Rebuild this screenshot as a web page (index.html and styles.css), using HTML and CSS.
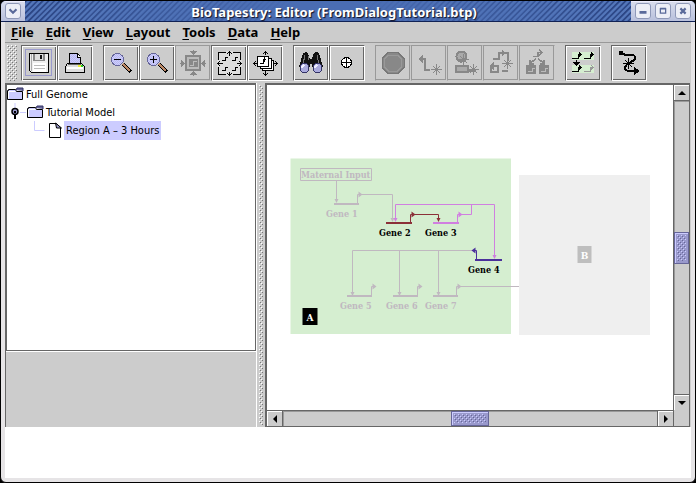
FILE: index.html
```html
<!DOCTYPE html>
<html lang="en">
<head>
<meta charset="utf-8">
<title>BioTapestry: Editor (FromDialogTutorial.btp)</title>
<link rel="stylesheet" href="styles.css">
</head>
<body>
<svg class="defs" aria-hidden="true">
  <defs>
    <pattern id="bumps" width="4" height="4" patternUnits="userSpaceOnUse">
      <path d="M0 0h1v1h-1zM2 2h1v1h-1z" fill="#fff"/><path d="M1 1h1v1h-1zM3 3h1v1h-1z" fill="#777"/>
    </pattern>
    <pattern id="thumb-bumps" width="4" height="4" patternUnits="userSpaceOnUse">
      <path d="M0 0h1v1h-1zM2 2h1v1h-1z" fill="#ccf"/><path d="M1 1h1v1h-1zM3 3h1v1h-1z" fill="#669"/>
    </pattern>
    <pattern id="lens" width="2" height="2" patternUnits="userSpaceOnUse">
      <path d="M0 0h2v2h-2z" fill="#ccf"/><path d="M0 0h1v1h-1zM1 1h1v1h-1z" fill="#bbe"/>
    </pattern>
    <g id="spark"><path d="M.5-5V6M-5 .5H6M-3-3L4 4M4-3L-3 4" fill="none" stroke="currentColor"/></g>
    <g id="folder">
      <path d="M9 3l1-2h6v3" fill="#669" stroke="#336"/>
      <path d="M.5 12.500v-9h1v-1h7l1 2h6v8z" fill="#ccf" stroke="#000"/>
      <path d="M1.500 11.500v-7h7" fill="none" stroke="#fff"/>
    </g>
  </defs>
</svg>
<div class="window">
  <header class="titlebar">
    <div class="corner-box"><button class="win-btn" aria-label="Window menu"><svg viewBox="0 0 16 16"><path d="M4 6l4 4 4-4" fill="none" stroke="#5a6a9a" stroke-width="2.500"/></svg></button></div>
    <h1 class="title">BioTapestry: Editor (FromDialogTutorial.btp)</h1>
    <div class="corner-box">
      <button class="win-btn" aria-label="Minimize"><svg viewBox="0 0 16 16"><path d="M4 8h8v3H4z" fill="#5a6a9a"/></svg></button>
      <button class="win-btn" aria-label="Maximize"><svg viewBox="0 0 16 16"><path d="M5 5.500h6v5H5zM4.500 5h7" fill="none" stroke="#5a6a9a" stroke-width="1.500"/></svg></button>
      <button class="win-btn" aria-label="Close"><svg viewBox="0 0 16 16"><path d="M5 5l6 6M11 5l-6 6" stroke="#5a6a9a" stroke-width="2.500"/></svg></button>
    </div>
  </header>
  <nav class="menubar" aria-label="Main">
    <button><u>F</u>ile</button><button><u>E</u>dit</button><button><u>V</u>iew</button><button><u>L</u>ayout</button><button><u>T</u>ools</button><button><u>D</u>ata</button><button><u>H</u>elp</button>
  </nav>
  <div class="toolbar" role="toolbar" aria-label="Tools">
    <svg class="grip"><rect width="100%" height="100%" fill="url(#bumps)"/></svg>
    <div class="group">
      <button class="tool" aria-label="Save"><svg viewBox="0 0 32 32">
        <path d="M2.500 2.500h26v26h-26z" fill="none" stroke="#99c"/>
        <path d="M6.500 6.500h19v19h-17l-2-2z" fill="#eee" stroke="#000"/><path d="M8.500 7v17" stroke="#aaa"/><path d="M10 7h12v7H10z" fill="#888"/><path d="M12 7h8v6h-8z" fill="#ddd"/><path d="M17 8h2v4h-2z" fill="#111"/><path d="M10 16h13v9H10z" fill="#fff"/><path d="M11 18.500h11M11 21.500h11" stroke="#bbb"/></svg></button>
      <button class="tool" aria-label="Print"><svg viewBox="0 0 32 32">
        <path d="M10.500 17.500v-11h8l3 4v7z" fill="url(#lens)" stroke="#000"/><path d="M18.500 7v3.500h3" fill="#fff" stroke="#000"/>
        <path d="M8.500 16.500h14l3 3v6h-19v-6z" fill="#ddd" stroke="#000"/><path d="M8 20h16v2H8z" fill="#fff"/><path d="M9 17.500h13" stroke="#666"/><path d="M19 18h3v2h-3z" fill="#ee3"/><path d="M22 18h2v2h-2z" fill="#2c2"/></svg></button>
    </div>
    <div class="group">
      <button class="tool" aria-label="Zoom out"><svg viewBox="0 0 32 32"><path d="M18 17l8 8" stroke="#000" stroke-width="4"/><path d="M18 17l7 7" stroke="#b86" stroke-width="2"/><circle cx="12.500" cy="12.500" r="6" fill="url(#lens)" stroke="#669" stroke-width="1"/><path d="M9 12.500h7" stroke="#000"/></svg></button>
      <button class="tool" aria-label="Zoom in"><svg viewBox="0 0 32 32"><path d="M18 17l8 8" stroke="#000" stroke-width="4"/><path d="M18 17l7 7" stroke="#b86" stroke-width="2"/><circle cx="12.500" cy="12.500" r="6" fill="url(#lens)" stroke="#669" stroke-width="1"/><path d="M9 12.500h7M12.500 9v7" stroke="#000"/></svg></button>
      <button class="tool" aria-label="Zoom to selection" disabled><svg viewBox="0 0 32 32"><path d="M9 9h14v14H9z" fill="#bbb" stroke="#888" stroke-width="2"/><path d="M12 12h9v8h-9z" fill="#888"/><path d="M13 18.500h3v-4h4" fill="none" stroke="#bbb"/><path d="M16.500 3v4M16.500 29v-4M3 16.500h4M29 16.500h-4" stroke="#888"/><path d="M13 4h7l-3.500 4zM13 28h7l-3.500-4zM4 13v7l4-3.500zM28 13v7l-4-3.500z" fill="#888"/></svg></button>
      <button class="tool" aria-label="Zoom to model"><svg viewBox="0 0 32 32"><path d="M5.500 5.500h22v22h-22z" fill="#ddd" stroke="#000"/><path d="M4 13h3v7H4zM26 13h3v7h-3zM13 4h7v3h-7zM13 26h7v3h-7z" fill="#ddd"/><path d="M4.500 16.500h5M7 14l-2.500 2.500L7 19M28.500 16.500h-5M26 14l2.500 2.500L26 19M16.500 4.500v4M14 7l2.500-2.500L19 7M16.500 28.500v-4M14 26l2.500 2.500L19 26" fill="none" stroke="#000"/><path d="M9 13.500h3v-3h3M19 13.500h3v-3h3M9 23.500h3v-3h3M19 23.500h3v-3h3" fill="none" stroke="#000"/></svg></button>
      <button class="tool" aria-label="Zoom to all models"><svg viewBox="0 0 32 32"><path d="M13.500 13.500h11v10h-11z" fill="#fff" stroke="#000"/><path d="M11.500 11.500h11v10h-11z" fill="#fff" stroke="#000"/><path d="M8.500 9.500h11v10h-11z" fill="#fff" stroke="#000"/><path d="M11 16.500h3v-4h3M15.500 10v5" fill="none" stroke="#000"/><path d="M16.500 4v4M14 7l2.500-2.500L19 7M16.500 28v-4M14 26l2.500 2.500L19 26M4 16.500h4M7 14l-2.500 2.500L7 19M29 16.500h-4M26 14l2.500 2.500L26 19" fill="none" stroke="#000"/></svg></button>
    </div>
    <div class="group">
      <button class="tool" aria-label="Search"><svg viewBox="0 0 32 32"><path d="M8 6l3-1 2 1 2 6h2l2-6 2-1 3 1 4 14-4 3-6-2-2-5-2 5-6 2-4-3z" fill="#111"/><path d="M10 8l-2 9M22 8l2 9M13 9v4" stroke="#777"/><circle cx="9.500" cy="21" r="4.500" fill="#aad" stroke="#336"/><circle cx="22.500" cy="21" r="4.500" fill="#aad" stroke="#336"/><path d="M6 21l3-3M19 21l3-3" stroke="#eef" stroke-width="2"/></svg></button>
      <button class="tool" aria-label="Center"><svg viewBox="0 0 32 32"><circle cx="15.500" cy="15.500" r="5" fill="#fff" stroke="#000"/><path d="M10 15.500h11M15.500 10v11" stroke="#000"/></svg></button>
    </div>
    <div class="group">
      <button class="tool" aria-label="Stop" disabled><svg viewBox="0 0 32 32"><path d="M11 5.500h10l6 6v9l-6 6H11l-6-6v-9z" fill="#888" stroke="#777"/><path d="M11.500 8h9l4 4v8l-4 4h-9l-4-4v-8z" fill="none" stroke="#999"/></svg></button>
      <button class="tool" aria-label="Add gene link" disabled><svg viewBox="0 0 32 32"><path d="M7 12h5v11h5" fill="none" stroke="#888" stroke-width="2"/><path d="M5 12l5-4v8z" fill="#888"/><use href="#spark" x="23" y="22"/></svg></button>
      <button class="tool" aria-label="Add node" disabled><svg viewBox="0 0 32 32"><path d="M7 19h12v6H7z" fill="#aaa" stroke="#888" stroke-width="2"/><circle cx="12.500" cy="9.500" r="5" fill="#aaa" stroke="#888" stroke-width="2"/><path d="M19 23h8" stroke="#888" stroke-width="3"/><use href="#spark" x="14" y="12"/><use href="#spark" x="24" y="22"/></svg></button>
      <button class="tool" aria-label="Add link" disabled><svg viewBox="0 0 32 32"><path d="M8 12h6V6h9v8M13 26v-7H6M13 25H6v-5M23 24h-6" fill="none" stroke="#888" stroke-width="2"/><path d="M17 3l4 3-4 3zM9 15v8l-5-4z" fill="#888"/><use href="#spark" x="22" y="16"/></svg></button>
      <button class="tool" aria-label="Add submodel" disabled><svg viewBox="0 0 32 32"><path d="M5 18h10v9H5zM18 18h10v9H18z" fill="#888"/><path d="M7 24.500h4v-3h3M20 24.500h4v-3h3" fill="none" stroke="#bbb"/><path d="M12 9.500h5v-4h4M18 3l3 2.500-3 2.500M15 12l-6 4M17 12l6 4M9 13v4h4M23 13v4h-4" fill="none" stroke="#888" stroke-width="1.500"/></svg></button>
    </div>
    <div class="group">
      <button class="tool" aria-label="Pull down"><svg viewBox="0 0 32 32"><path d="M5 5h22v8H5zM5 18h22v8H5z" fill="#d5eed0"/><path d="M5 11.500h6v-4h3M17 11.500h6v-4h3M5 24.500h6v-4h3M9.500 13v4" fill="none" stroke="#000"/><path d="M12 5l3 2.500-3 2.500zM24 5l3 2.500-3 2.500zM12 18l3 2.500-3 2.500zM6 15h7l-3.500 4z"/><path d="M17 24.500h6v-4h3M24 18l2 2.500-2 2" fill="none" stroke="#999"/></svg></button>
    </div>
    <div class="group">
      <button class="tool" aria-label="Relayout link"><svg viewBox="0 0 32 32"><path d="M7 6l6 2h6q3 0 3 3 0 2-4 4-6 3-6 6 0 3 5 3h7" fill="none" stroke="#000" stroke-width="2"/><path d="M6 4h4v4H6zM21 20l6 4-6 4z"/><use href="#spark" x="15" y="16"/></svg></button>
    </div>
  </div>
  <main class="split">
    <aside class="side">
      <ul class="tree">
        <li><span class="row"><svg class="icon" viewBox="0 0 17 14"><use href="#folder"/></svg><span class="label">Full Genome</span></span></li>
        <li><span class="row"><svg class="handle" viewBox="0 0 20 18"><path d="M8 0v5M13 9.500h6" stroke="#ccf"/><circle cx="8" cy="8.500" r="3" fill="#99c" stroke="#000" stroke-width="1.500"/><path d="M7 8h2v2H7z"/><path d="M8 12v4" stroke="#000" stroke-width="2"/></svg><svg class="icon" viewBox="0 0 17 14"><use href="#folder"/></svg><span class="label">Tutorial Model</span></span>
          <ul><li><span class="row"><svg class="elbow" viewBox="0 0 20 18"><path d="M7.500 0v9.500h10" fill="none" stroke="#ccf"/></svg><svg class="icon" viewBox="0 0 17 16"><path d="M2.500 1.500h7l4 4v10h-11z" fill="#fff" stroke="#000"/><path d="M8.500 1l1 5h5z" fill="#99c" stroke="#000"/></svg><span class="label selected">Region A – 3 Hours</span></span></li></ul></li>
      </ul>
      <div class="overview"></div>
    </aside>
    <div class="divider"><svg><rect width="100%" height="100%" fill="url(#bumps)"/></svg></div>
    <section class="view">
      <div class="canvas">
        <svg class="network" viewBox="290 158 360 180" role="img" aria-label="Gene network, regions A and B">
          <path d="M290.500 158.500h220.500v175.500H290.500z" fill="#d5eed0"/>
          <path d="M519 175h131v160H519z" fill="#efefef"/>
          <g class="muted" fill="none">
            <path d="M300.500 168.500h71v12h-71zM336.500 181v19M357.500 204v-9.500h35V220M472 250.500H352.500V293M399.500 251v42M438.500 251v42M371.500 296v-9.500h2M417.500 296v-9.500h2M456.500 296v-9.500H519"/>
            <path class="bar" d="M334 204h25M347 296h25M393 296h25M433 296h25"/>
          </g>
          <path fill="#c0b8c0" d="M334.500 199h4l-2 4zM358.500 191.500l4 3-4 3zM390.500 218h4l-2 4zM350.500 292h4l-2 4zM397.500 292h4l-2 4zM436.500 292h4l-2 4zM372.500 283.500l4 3-4 3zM418.500 283.500l4 3-4 3zM457.500 283.500l4 3-4 3z"/>
          <g class="pink" fill="none"><path d="M395.500 219v-14.500h99V257M457.500 223v-8.500h14v-10"/><path class="bar" d="M433 223h26"/></g>
          <path fill="#d07fe0" d="M393.500 218h4l-2 4zM458.500 211.500l4 3-4 3zM492.500 255h4l-2 4z"/>
          <g class="red" fill="none"><path d="M410.500 223v-8.500h28V219"/><path class="bar" d="M386 223h26"/></g>
          <path fill="#8b3038" d="M411.500 211.500l4 3-4 3zM436.500 218h4l-2 4z"/>
          <g class="blue" fill="none"><path d="M476.500 260v-9.500h-2"/><path class="bar" d="M475 260h27"/></g>
          <path fill="#4b309b" d="M475.500 247.500l-4 3 4 3z"/>
          <g class="faded">
            <text x="301" y="178">Maternal Input</text><text x="326" y="217">Gene 1</text><text x="340" y="309">Gene 5</text><text x="386" y="309">Gene 6</text><text x="425" y="309">Gene 7</text>
          </g>
          <text x="379" y="236">Gene 2</text><text x="425" y="236">Gene 3</text><text x="468" y="273">Gene 4</text>
          <path d="M302.500 308h15v17h-15z"/><path d="M577.500 246h14v17h-14z" fill="#bebebe"/>
          <text class="tag" x="310" y="321">A</text><text class="tag" x="584.500" y="259">B</text>
        </svg>
      </div>
      <div class="scroll vertical">
        <button class="arrow" aria-label="Scroll up"><svg viewBox="0 0 14 14"><path d="M3 9h8l-4-4z"/></svg></button>
        <div class="track"><div class="thumb"><svg><rect width="100%" height="100%" fill="url(#thumb-bumps)"/></svg></div></div>
        <button class="arrow" aria-label="Scroll down"><svg viewBox="0 0 14 14"><path d="M3 5h8l-4 4z"/></svg></button>
      </div>
      <div class="scroll horizontal">
        <button class="arrow" aria-label="Scroll left"><svg viewBox="0 0 14 14"><path d="M9 3v8l-4-4z"/></svg></button>
        <div class="track"><div class="thumb"><svg><rect width="100%" height="100%" fill="url(#thumb-bumps)"/></svg></div></div>
        <button class="arrow" aria-label="Scroll right"><svg viewBox="0 0 14 14"><path d="M5 3v8l4-4z"/></svg></button>
      </div>
      <div class="scroll-corner"></div>
    </section>
  </main>
  <footer class="status"></footer>
</div>
</body>
</html>
```
FILE: styles.css
```css
* { box-sizing: border-box; }
body { margin: 0; background: #000; font-family: "Noto Sans", sans-serif; }
button { padding: 0; border: 0; background: none; font: inherit; color: inherit; }
svg { display: block; }
.defs { position: absolute; width: 0; height: 0; }

.window {
  height: 100vh;
  display: flex;
  flex-direction: column;
  border: 1px solid #000;
  border-radius: 6px;
  overflow: hidden;
  background: #e6e4e6;
  padding-bottom: 4px;
}

/* Title bar */
.titlebar {
  flex: none;
  height: 21px;
  display: flex;
  background: #4a6db3;
  border-bottom: 1px solid #112255;
}
.corner-box {
  display: flex;
  gap: 4px;
  padding: 1px 4px;
  background: linear-gradient(#d8dcec, #b8c0dc);
  border-top: 1px solid #eef;
}
.win-btn {
  width: 16px;
  height: 16px;
  background: #eceef6;
  border: 1px solid #8e98b8;
  border-radius: 3px;
}
.win-btn svg { width: 14px; height: 14px; }
.title {
  flex: 1;
  margin: 0;
  padding-left: 12px;
  text-align: center;
  font-size: 13px;
  line-height: 22px;
  font-weight: bold;
  color: #fff;
  text-shadow: 1px 1px 1px #112;
  background:
    linear-gradient(90deg, transparent, #4a6db3 45%, #4a6db3 55%, transparent),
    repeating-linear-gradient(135deg, #2c4685 0 1px, #5578bb 2px 3px, #3f60a5 4px);
}

/* Menu bar */
.menubar {
  flex: none;
  display: flex;
  gap: 12px;
  height: 21px;
  margin: 0 4px;
  padding: 0 6px;
  background: #ccc;
  border-bottom: 1px solid #999;
  font-size: 13px;
  font-weight: bold;
}
.menubar u { text-underline-offset: 2px; }

/* Tool bar */
.toolbar {
  flex: none;
  display: flex;
  gap: 10px;
  height: 40px;
  margin: 0 4px;
  padding: 2px;
  background: #ccc;
}
.grip { width: 10px; height: 36px; margin-right: -6px; }
.group { display: flex; }
.tool {
  width: 36px;
  height: 36px;
  padding: 1px;
  border: 1px solid;
  border-color: #666 #fff #fff #666;
  box-shadow: inset 1px 1px #fff, inset -1px -1px #666;
}
.tool:disabled { color: #888; border-color: #999 #ccc #ccc #999; box-shadow: inset -1px -1px #999; }
.tool svg { width: 32px; height: 32px; shape-rendering: crispEdges; }

/* Split area */
.split {
  flex: 1;
  min-height: 0;
  display: grid;
  grid-template-columns: minmax(0, 252fr) 8px minmax(0, 426fr);
  margin: 0 4px;
  background: #ccc;
}
.side {
  display: flex;
  flex-direction: column;
  border-left: 1px solid #666;
  border-right: 1px solid #fff;
  min-width: 0;
}
.tree, .tree ul { list-style: none; margin: 0; padding: 0; }
.tree {
  flex: 1;
  background: #fff;
  border: 1px solid #666;
  border-top-width: 2px;
  font-family: "DejaVu Sans Condensed", "DejaVu Sans", sans-serif;
  font-size: 11px;
  line-height: 19px;
}
.tree ul { padding-left: 20px; }
.row { display: flex; align-items: center; height: 18px; white-space: nowrap; }
.icon { width: 17px; height: 16px; flex: none; }
.handle, .elbow { width: 20px; height: 18px; flex: none; }
.label { padding: 0 2px; }
.selected { background: #ccf; }
.overview { height: 76px; border-top: 1px solid #fff; }
.divider { padding: 2px; }
.divider svg { width: 4px; height: 100%; }

.view {
  display: grid;
  grid-template-columns: 1fr 16px;
  grid-template-rows: 1fr 16px;
  border: solid #666;
  border-width: 2px 1px 1px 2px;
  margin-right: 1px;
  min-width: 0;
  min-height: 0;
}
.canvas { background: #fff; display: flex; align-items: center; justify-content: center; min-width: 0; min-height: 0; }
.network { width: 360px; height: 180px; }
.network text { font: bold 9px "DejaVu Serif Condensed", "DejaVu Serif", serif; }
.network .faded { fill: #c0b8c0; }
.network .tag { fill: #fff; font-size: 10px; text-anchor: middle; }
.muted { stroke: #c0b8c0; }
.pink { stroke: #d07fe0; }
.red { stroke: #8b3038; }
.blue { stroke: #4b309b; }
.bar { stroke-width: 2; }

.scroll { display: flex; background: #ccc; }
.vertical { flex-direction: column; border-left: 1px solid #666; }
.horizontal { border-top: 1px solid #666; }
.arrow { width: 15px; height: 15px; flex: none; border: solid #fff; border-width: 1px 0 0 1px; }
.arrow svg { width: 14px; height: 14px; }
.track { flex: 1; display: flex; align-items: center; justify-content: center; border: 1px solid #666; }
.vertical .track { border-width: 1px 0; box-shadow: inset 1px 1px #999; }
.horizontal .track { border-width: 0 1px; box-shadow: inset 1px 1px #999; }
.thumb { background: #99c; border: 1px solid #669; padding: 2px; box-shadow: inset 1px 1px #ccf; }
.thumb svg { width: 100%; height: 100%; }
.vertical .thumb { width: 15px; height: 32px; }
.horizontal .thumb { width: 38px; height: 15px; }
.scroll-corner { border: solid #666; border-width: 0 0 0 1px; }

.status { flex: none; height: 51px; margin: 0 4px; background: #fff; }
```
